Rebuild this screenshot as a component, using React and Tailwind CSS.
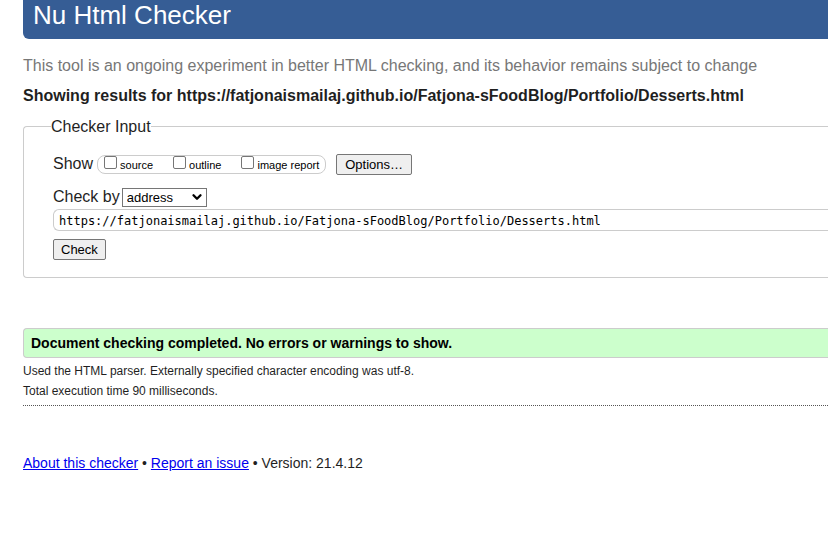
import { ChevronDown } from "lucide-react";

const views = ["source", "outline", "image report"];

function ShowOption({ name }) {
  return (
    <label className="flex items-start gap-[3px]">
      <input
        type="checkbox"
        className="size-[13px] appearance-none rounded-[2px] border border-[#767676] bg-white checked:bg-[#0075ff]"
      />
      <span className="pt-px text-[11px] leading-4 text-black">{name}</span>
    </label>
  );
}

function CheckerForm() {
  return (
    <form onSubmit={(e) => e.preventDefault()}>
      <fieldset className="rounded-l border border-r-0 border-[#ccc] pl-[29px] pb-[17px]">
        <legend className="-ml-[2px] h-5 text-base leading-[22px]">Checker Input</legend>
        <div className="mt-[17px] flex h-[22px] items-center">
          <span className="leading-5">Show</span>
          <div className="ml-1 flex h-[19px] gap-5 rounded-lg border border-[#ccc] pl-1.5 pr-[6px]">
            {views.map((name) => (
              <ShowOption key={name} name={name} />
            ))}
          </div>
          <button
            type="button"
            className="ml-2.5 h-[21px] rounded-[2px] border border-[#767676] bg-[#efefef] px-2 text-[13px] leading-[19px] text-black"
          >
            Options…
          </button>
        </div>
        <div className="mt-3 flex h-5 items-center gap-[2px]">
          <label htmlFor="method" className="leading-5">
            Check by
          </label>
          <div className="relative">
            <select
              id="method"
              defaultValue="address"
              className="block h-[19px] w-[85px] appearance-none border border-[#767676] bg-white pl-1 text-[13px] leading-[17px] text-black"
            >
              <option value="address">address</option>
              <option value="file">file upload</option>
              <option value="text">text input</option>
            </select>
            <ChevronDown
              aria-hidden="true"
              className="pointer-events-none absolute right-[3px] top-[2px] size-3.5 text-black"
              strokeWidth={4}
            />
          </div>
        </div>
        <input
          type="text"
          aria-label="Address"
          defaultValue="https://fatjonaismailaj.github.io/Fatjona-sFoodBlog/Portfolio/Desserts.html"
          className="mt-[2px] block h-[22px] w-full rounded-l-md border border-r-0 border-[#ccc] pl-[5px] pt-[2px] font-['DejaVu_Sans_Mono',monospace] text-[12px] text-black"
        />
        <button
          type="submit"
          className="mt-2 block h-[21px] rounded-[2px] border border-[#767676] bg-[#efefef] px-[7px] text-[13px] leading-[19px] text-black"
        >
          Check
        </button>
      </fieldset>
    </form>
  );
}

export default function App() {
  return (
    <div className="min-h-screen overflow-x-hidden bg-white pl-[23px] font-['Liberation_Sans',Arial,sans-serif] text-base text-[#1f1f1f]">
      <header className="rounded-bl-md bg-[#365d95] pb-2 pl-2.5">
        <h1 className="text-[26px] leading-[31px] text-white">Nu Html Checker</h1>
      </header>
      <main>
        <p className="mt-[17px] leading-5 text-[#777]">
          This tool is an ongoing experiment in better HTML checking, and its behavior remains subject to change
        </p>
        <h2 className="mb-2.5 mt-2.5 font-bold leading-5">
          Showing results for https://fatjonaismailaj.github.io/Fatjona-sFoodBlog/Portfolio/Desserts.html
        </h2>
        <CheckerForm />
        <p className="mt-[50px] rounded-l border border-r-0 border-[#ccc] bg-[#cfc] pl-[7px] text-sm font-bold leading-7 text-black">
          Document checking completed. No errors or warnings to show.
        </p>
        <div className="border-b border-dotted border-[#555] pb-1 pt-[3px] text-xs leading-5">
          <p>Used the HTML parser. Externally specified character encoding was utf-8.</p>
          <p>Total execution time 90 milliseconds.</p>
        </div>
      </main>
      <footer className="mt-[47px] text-sm leading-5">
        <a href="#about" className="text-[#00e] underline">About this checker</a>
        {" • "}
        <a href="#issue" className="text-[#00e] underline">Report an issue</a>
        {" • Version: 21.4.12"}
      </footer>
    </div>
  );
}
